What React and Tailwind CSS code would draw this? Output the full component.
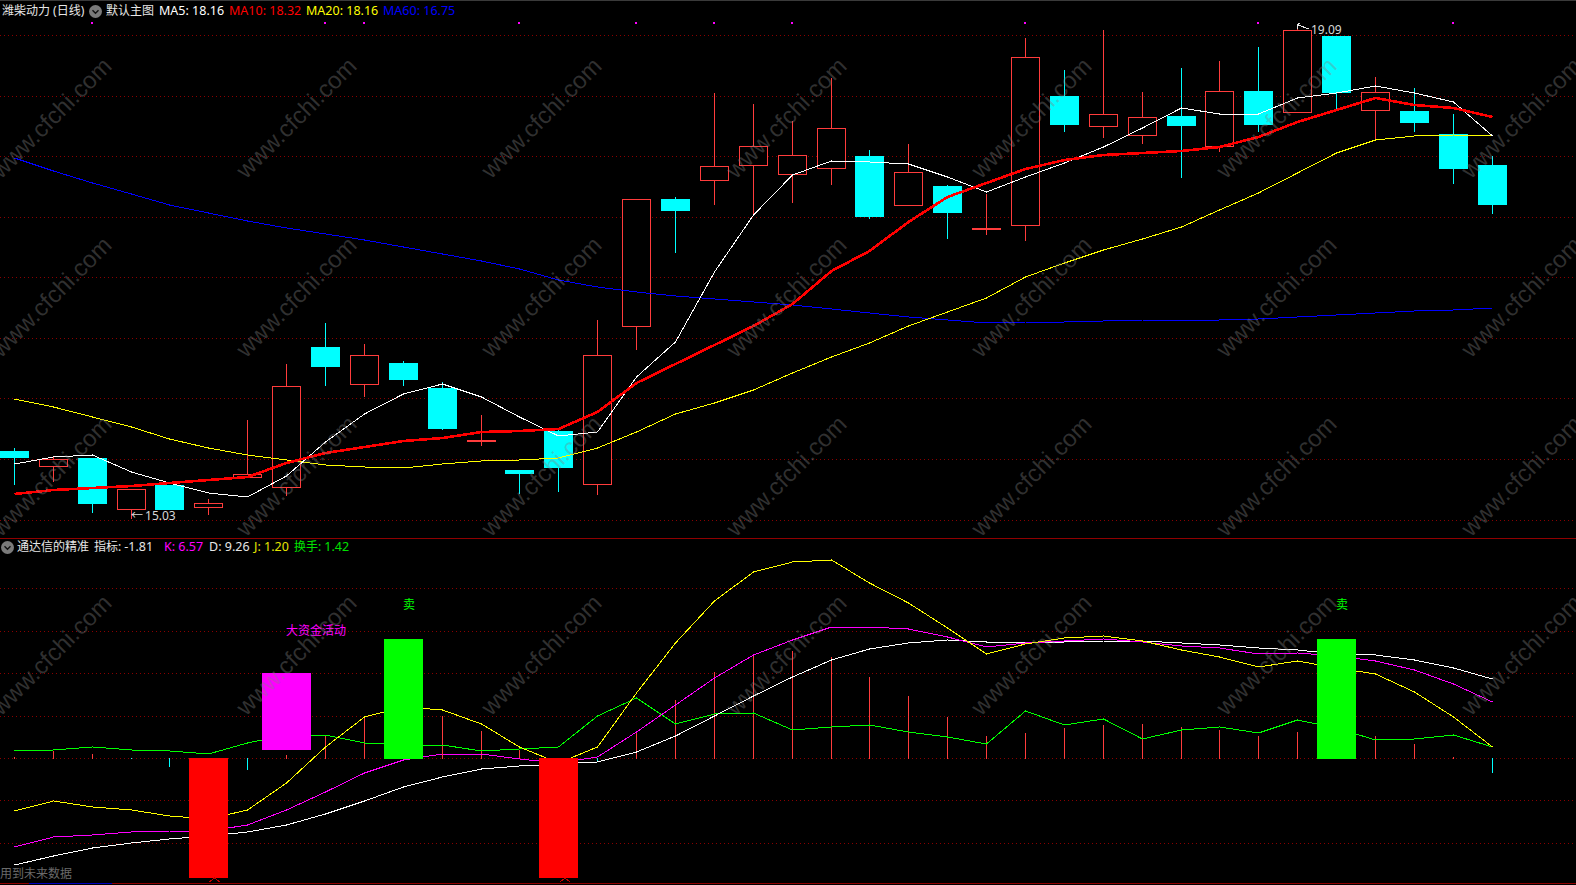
const cx = (i) => Math.floor(14.4 + 38.89 * i);

// type, bodyTop, bodyBottom, wickTop, wickBottom
const candles = [
  ["c",451,458,448,485],["r",459,466,457,482],["c",458,504,458,513],["r",489,509,489,519],
  ["c",485,510,485,510],["r",503,507,499,515],["r",474,477,420,477],["r",386,487,364,496],
  ["c",347,367,323,386],["r",355,384,344,397],["c",363,380,361,386],["c",388,429,382,430],
  ["r",440,441,415,446],["c",470,474,470,494],["c",431,468,429,492],["r",355,484,320,495],
  ["r",199,326,199,350],["c",199,211,197,253],["r",166,180,93,205],["r",146,165,104,216],
  ["r",155,174,121,203],["r",128,168,78,185],["c",156,217,150,219],["r",172,205,144,205],
  ["c",186,213,185,239],["r",228,229,194,235],["r",57,225,38,241],["c",96,125,70,132],
  ["r",114,126,30,138],["r",117,135,92,144],["c",116,126,68,178],["r",91,146,61,152],
  ["c",91,125,47,132],["r",30,112,27,112],["c",36,93,36,109],["r",92,110,77,139],
  ["c",111,123,88,132],["c",134,169,114,184],["c",165,205,156,214],
];

const ma5 = [464,457,455,472,483,493,497,476,442,414,394,384,397,417,436,432,377,342,272,215,175,161,162,164,177,192,177,163,147,128,108,114,114,98,93,86,93,102,136];
const ma10 = [494,490,488,486,483,480,477,463,453,447,441,438,432,431,429,412,383,364,345,326,304,271,251,222,197,183,169,160,155,153,151,147,137,122,110,98,105,108,117];
const ma20 = [399,407,417,427,439,448,455,460,465,467,468,464,461,460,458,448,432,414,403,390,373,357,343,326,312,298,277,263,250,239,227,210,193,173,153,140,136,135,136];
const ma60 = [158,171,183,194,205,213,221,228,234,240,247,254,261,269,280,287,292,296,299,302,305,309,313,317,320,323,322,322,321,320,320,320,319,317,315,313,311,310,308];

const turnover = [751,750,747,750,751,754,743,735,735,743,745,745,751,749,747,716,698,724,714,713,730,727,725,732,737,744,711,725,719,739,730,727,733,720,728,740,739,735,747];
const jLine = [811,801,807,810,816,819,810,783,747,717,707,710,724,747,763,747,693,643,601,572,562,560,583,603,628,654,644,638,636,641,650,657,667,661,668,674,692,717,747];
const kLine = [847,837,835,832,831,831,825,810,792,773,760,754,754,759,763,757,732,705,678,655,640,627,627,629,637,647,643,641,639,642,646,648,654,653,656,661,670,684,702];
const dLine = [865,856,848,843,839,836,832,825,814,801,787,777,769,766,764,762,752,736,716,696,677,660,649,643,640,642,642,642,641,641,643,645,648,650,654,655,660,668,679];

// index, top, bottom, colour
const sticks = [
  [0,757,759,"r"],[1,751,759,"r"],[2,754,759,"r"],[3,758,759,"c"],[4,758,767,"c"],[6,758,770,"c"],[7,755,759,"r"],
  [8,735,759,"r"],[9,717,759,"r"],[11,716,759,"r"],[12,731,759,"r"],[13,750,759,"r"],[15,758,761,"c"],
  [16,731,759,"r"],[17,700,759,"r"],[18,672,759,"r"],[19,655,759,"r"],[20,651,759,"r"],[21,657,759,"r"],
  [22,677,759,"r"],[23,696,759,"r"],[24,717,759,"r"],[25,736,759,"r"],[26,733,759,"r"],[27,728,759,"r"],
  [28,725,759,"r"],[29,724,759,"r"],[30,727,759,"r"],[31,730,759,"r"],[32,736,759,"r"],[33,732,759,"r"],
  [35,736,759,"r"],[36,744,759,"r"],[37,757,759,"r"],[38,758,773,"c"],
];

const RED = "#ff3c3c";
const CYAN = "#00ffff";
const dots = [2, 8, 9, 13, 16, 18, 20, 26, 32, 37];
const gridTop = [35.5, 96.5, 156.5, 217.5, 277.5, 338.5, 398.5, 459.5, 520.5];
const gridBottom = [588.5, 631.5, 673.5, 716.5, 758.5, 800.5, 843.5];

const pts = (arr) => arr.map((y, i) => `${cx(i) + 0.5},${y}`).join(" ");

function Line({ data, color, width = 1 }) {
  return <polyline points={pts(data)} fill="none" stroke={color} strokeWidth={width} />;
}

function Grid({ rows }) {
  return rows.map((y) => (
    <line key={y} x1="0" x2="1576" y1={y} y2={y} stroke="#8a0000" strokeWidth="1" strokeDasharray="1 3" />
  ));
}

function ChevronIcon() {
  return (
    <svg width="13" height="13" viewBox="0 0 13 13" className="flex-none">
      <circle cx="6.5" cy="6.5" r="6.5" fill="#7a7a7a" />
      <polyline points="3.5,5.2 6.5,8.2 9.5,5.2" fill="none" stroke="#111" strokeWidth="1.4" />
    </svg>
  );
}

function Marks() {
  return [0, 1, 2, 3].flatMap((r) =>
    [0, 1, 2, 3, 4, 5, 6].map((c) => (
      <div key={`${r}-${c}`} className="flex items-center justify-center">
        <span className="-rotate-45 whitespace-nowrap font-['Liberation_Sans',sans-serif] text-[24px] leading-none text-[rgba(128,128,128,0.38)]">
          www.cfchi.com
        </span>
      </div>
    ))
  );
}

export default function App() {
  return (
    <div className="relative h-[885px] w-[1576px] overflow-hidden bg-black font-['Noto_Sans','Noto_Sans_CJK_SC',sans-serif] text-[12px] leading-none text-[#e6e6e6]">
      <div className="h-[2px] border-t border-[#3a3a3a]" />

      <div className="flex h-[18px] items-center pl-[2px]">
        <span className="w-[87px] flex-none">潍柴动力 (日线)</span>
        <span className="w-[17px] flex-none"><ChevronIcon /></span>
        <span className="w-[53px] flex-none">默认主图</span>
        <span className="w-[70px] flex-none text-[12.5px] text-white">MA5: 18.16</span>
        <span className="w-[77px] flex-none text-[12.5px] text-[#ff0000]">MA10: 18.32</span>
        <span className="w-[77px] flex-none text-[12.5px] text-[#ffff00]">MA20: 18.16</span>
        <span className="flex-none text-[12.5px] text-[#0000ff]">MA60: 16.75</span>
      </div>

      <svg width="1576" height="518" viewBox="0 20 1576 518" shapeRendering="crispEdges" className="block">
        <Grid rows={gridTop} />
        {dots.map((i) => (
          <rect key={i} x={cx(i) - 1} y="22" width="2" height="2" fill="#ff00ff" />
        ))}
        {candles.map(([t, a, b, wa, wb], i) => {
          const x = cx(i);
          const col = t === "r" ? RED : CYAN;
          return (
            <g key={i}>
              <line x1={x + 0.5} x2={x + 0.5} y1={wa} y2={wb} stroke={col} />
              {t === "r" ? (
                <rect x={x - 13.5} y={a + 0.5} width="28" height={b - a} fill="#000" stroke={col} />
              ) : (
                <rect x={x - 14} y={a} width="29" height={b - a} fill={col} />
              )}
            </g>
          );
        })}
        <Line data={ma60} color="#0000ff" />
        <Line data={ma20} color="#ffff00" />
        <Line data={ma5} color="#ffffff" />
        <Line data={ma10} color="#ff0000" width={2.6} />
        <text x="131" y="520" fill="#d8d8d8" fontSize="12">←<tspan dx="2">15.03</tspan></text>
        <polyline points="1298,25 1309,29" fill="none" stroke="#e6e6e6" />
        <polyline points="1300,23 1297,25 1298,29" fill="none" stroke="#e6e6e6" />
        <text x="1311" y="34" fill="#d8d8d8" fontSize="12">19.09</text>
      </svg>

      <div className="h-[1px] bg-[#8f0000]" />

      <div className="flex h-[20px] items-center pb-[4px] pl-[1px]">
        <span className="mr-[3px] flex-none"><ChevronIcon /></span>
        <span className="w-[77px] flex-none">通达信的精准</span>
        <span className="w-[70px] flex-none">指标: <span className="text-[12.5px]">-1.81</span></span>
        <span className="w-[45px] flex-none text-[12.5px] text-[#ff00ff]">K: 6.57</span>
        <span className="w-[45px] flex-none text-[12.5px]">D: 9.26</span>
        <span className="w-[40px] flex-none text-[12.5px] text-[#e6e600]">J: 1.20</span>
        <span className="flex-none text-[#00e000]">换手: <span className="text-[12.5px]">1.42</span></span>
      </div>

      <svg width="1576" height="324" viewBox="0 559 1576 324" shapeRendering="crispEdges" className="block">
        <Grid rows={gridBottom} />
        {sticks.map(([i, a, b, t]) => (
          <line key={i} x1={cx(i) + 0.5} x2={cx(i) + 0.5} y1={a} y2={b} stroke={t === "r" ? RED : CYAN} />
        ))}
        <Line data={turnover} color="#00ff00" />
        <Line data={dLine} color="#ffffff" />
        <Line data={kLine} color="#ff00ff" />
        <Line data={jLine} color="#ffff00" />
        <rect x="189" y="758" width="39" height="120" fill="#ff0000" />
        <rect x="539" y="758" width="39" height="120" fill="#ff0000" />
        <rect x="262" y="673" width="49" height="77" fill="#ff00ff" />
        <rect x="384" y="639" width="39" height="120" fill="#00ff00" />
        <rect x="1317" y="639" width="39" height="120" fill="#00ff00" />
        <polyline points="209,882 214.5,878 220,882" fill="none" stroke="#c00000" />
        <polyline points="560,882 565,878 570,882" fill="none" stroke="#c00000" />
        <text x="403" y="609" fill="#00ff00" fontSize="12">卖</text>
        <text x="1336" y="609" fill="#00ff00" fontSize="12">卖</text>
        <text x="286" y="635" fill="#ff00ff" fontSize="12">大资金活动</text>
      </svg>

      <div className="relative h-[1px] bg-[#8f0000]">
        <div className="absolute left-[29px] top-0 h-[1px] w-[83px] bg-[#0000c0]" />
      </div>

      <div className="absolute bottom-[5px] left-0 text-[12px] text-[#6a6a6a]">用到未来数据</div>

      <div className="pointer-events-none absolute left-[-71px] top-[28px] grid auto-rows-[179px] grid-cols-[repeat(7,245px)]">
        <Marks />
      </div>
    </div>
  );
}
